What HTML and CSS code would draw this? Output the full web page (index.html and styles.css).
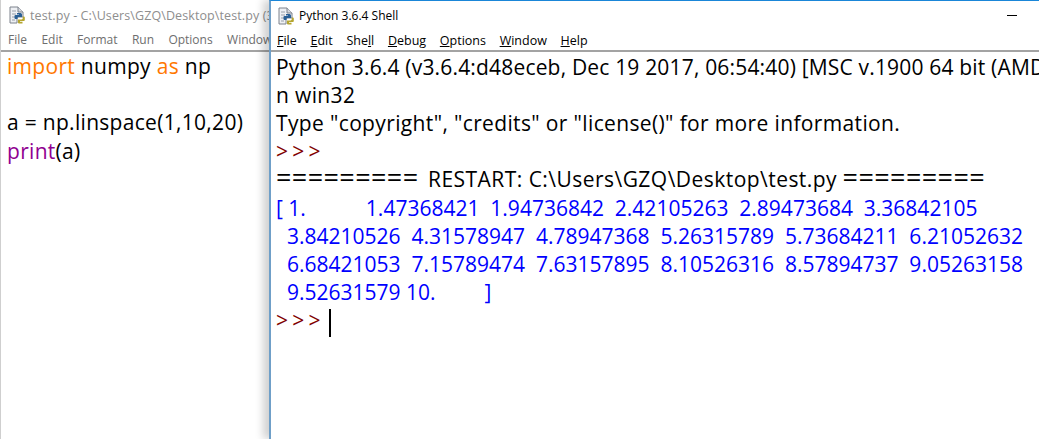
FILE: index.html
```html
<!DOCTYPE html>
<html lang="en">
<head>
<meta charset="utf-8">
<title>Python 3.6.4 Shell</title>
<link rel="stylesheet" href="styles.css">
</head>
<body>
<svg class="defs" width="0" height="0" aria-hidden="true">
  <symbol id="pyfile" viewBox="0 0 18 18">
    <path d="M2 1h8l5 5v5H9v6H2z" fill="#eef0f4" stroke="#7d828c" stroke-width="1"/>
    <path d="M10 1v5h5" fill="#d5d8de" stroke="#7d828c" stroke-width="1"/>
    <path d="M4 5h4M4 8h4M4 11h3M4 14h3" stroke="#9aa0aa" stroke-width="1"/>
    <path d="M9 7h3.500a1.500 1.500 0 0 1 1.500 1.500V11H10.500a1 1 0 0 0-1 1v1H7.500a1 1 0 0 1-1-1v-2a1 1 0 0 1 1-1H11V8.500H9z" fill="#2a5f95"/>
    <path d="M14.800 10.500h1a1 1 0 0 1 1 1v2.500a1 1 0 0 1-1 1H12v.8h2.500V17.500h-3.300a1.300 1.300 0 0 1-1.300-1.300V13.500h3.600a1.500 1.500 0 0 0 1.300-1.500z" fill="#b5a52f"/>
  </symbol>
</svg>
<div class="desktop">
  <section class="editor">
    <header class="titlebar">
      <svg class="appicon"><use href="#pyfile"/></svg>
      <span class="title title-dim">test.py - C:\Users\GZQ\Desktop\test.py (3.6.4)</span>
    </header>
    <nav class="menubar menubar-dim">
      <span>File</span><span>Edit</span><span>Format</span><span>Run</span><span>Options</span><span>Window</span>
    </nav>
    <pre class="code"><span class="kw">import</span> numpy <span class="kw">as</span> np

a = np.linspace(1,10,20)
<span class="fn">print</span>(a)</pre>
  </section>
  <section class="shell">
    <header class="titlebar">
      <svg class="appicon"><use href="#pyfile"/></svg>
      <span class="title">Python 3.6.4 Shell</span>
      <span class="minimize"></span>
    </header>
    <nav class="menubar">
      <span><u>F</u>ile</span><span><u>E</u>dit</span><span>She<u>l</u>l</span><span><u>D</u>ebug</span><span><u>O</u>ptions</span><span><u>W</u>indow</span><span><u>H</u>elp</span>
    </nav>
    <pre class="console"><span class="banner">Python 3.6.4 (v3.6.4:d48eceb, Dec 19 2017, 06:54:40) [MSC v.1900 64 bit (AMD64)] o</span>
<span class="info">n win32
Type "copyright", "credits" or "license()" for more information.</span>
<span class="prompt">&gt;&gt;&gt;</span>
<span class="eq">=========</span> <span class="restart">RESTART: C:\Users\GZQ\Desktop\test.py</span> <span class="eq">=========</span>
<span class="out">[ 1.           1.47368421  1.94736842  2.42105263  2.89473684  3.36842105
  3.84210526  4.31578947  4.78947368  5.26315789  5.73684211  6.21052632
  6.68421053  7.15789474  7.63157895  8.10526316  8.57894737  9.05263158
  9.52631579 10.         ]</span>
<span class="prompt">&gt;&gt;&gt;</span><span class="caret"></span></pre>
  </section>
</div>
</body>
</html>
```

FILE: styles.css
```css
* { box-sizing: border-box; }
html, body { margin: 0; height: 100%; background: #fff; overflow: hidden; }
.defs { position: absolute; }
.desktop {
  display: grid;
  grid-template-columns: 269px 1fr;
  width: 1039px;
  height: 439px;
  font-family: "Open Sans", "Noto Sans", sans-serif;
  color: #000;
}
.editor, .shell { min-width: 0; overflow: hidden; background: #fff; }
.editor { border-left: 1px solid #cfcfcf; }
.shell {
  border-left: 2px solid #6f9fc8;
  border-top: 1px solid #1a86d8;
  box-shadow: -6px 0 8px rgba(0, 0, 0, .18);
  position: relative;
}
.titlebar {
  display: flex;
  align-items: center;
  height: 29px;
  padding-left: 6px;
  gap: 4px;
}
.editor .titlebar { height: 30px; padding-left: 7px; }
.appicon { width: 18px; height: 18px; flex: none; }
.title { font-size: 12px; white-space: nowrap; color: #000; }
.title-dim { color: #8e8e8e; font-size: 12.5px; letter-spacing: .1px; }
.minimize {
  margin-left: auto;
  margin-right: 22px;
  width: 10px;
  height: 1px;
  background: #000;
}
.menubar {
  display: flex;
  gap: 13.7px;
  height: 22px;
  padding-left: 6px;
  font-size: 12.5px;
  line-height: 22px;
  white-space: nowrap;
  border-bottom: 2px solid #a3a3a3;
  background: #fff;
}
.menubar-dim { color: #6e6e6e; padding-left: 7px; font-size: 12px; line-height: 20px; gap: 14.4px; }
.code, .console {
  margin: 0;
  font-family: "Open Sans", "Noto Sans", sans-serif;
  font-size: 21px;
  line-height: 28.2px;
  white-space: pre;
}
.code { padding: 0 0 0 6px; letter-spacing: .3px; }
.console { padding: .5px 0 0 5px; }
.banner { letter-spacing: .18px; }
.info { letter-spacing: .36px; }
.restart { letter-spacing: .46px; margin-left: 4px; }
.eq { font-size: 27px; line-height: 20px; letter-spacing: .4px; }
.kw { color: #ff7700; }
.fn { color: #900090; }
.out { color: #0000ff; }
.prompt { color: #7f0000; letter-spacing: 4.3px; }
.caret {
  display: inline-block;
  width: 2px;
  height: 28px;
  margin-left: 4px;
  background: #000;
  vertical-align: middle;
}
```
